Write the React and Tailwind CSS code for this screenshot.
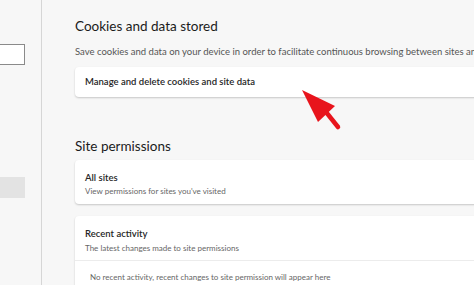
import React from 'react'

function Card({ children, className = '' }) {
  return (
    <div className={`w-[440px] rounded-[4px] bg-white shadow-[0_1px_2px_rgba(0,0,0,0.2)] ${className}`}>
      {children}
    </div>
  )
}

export default function App() {
  return (
    <div
      className="relative flex h-[285px] w-[474px] overflow-hidden bg-[#f7f7f7] text-[#1b1b1b]"
      style={{ fontFamily: 'Lato, "Noto Sans", sans-serif' }}
    >
      <aside className="w-[42px] shrink-0 border-r border-[#d6d6d6] bg-[#f7f7f7]">
        <div className="mt-[44px] h-[21px] w-[25px] border border-l-0 border-[#8a8a8a] bg-white" />
        <div className="mt-[112px] h-[21px] w-[25px] bg-[#e3e3e3]" />
      </aside>

      <main className="min-w-0 flex-1 whitespace-nowrap pl-[33px] pt-[15px]">
        <h2 className="text-[13.5px] font-normal leading-[22px] text-[#1b1b1b]">Cookies and data stored</h2>
        <p className="mt-[8px] text-[9.5px] leading-[14px] text-[#555]">
          Save cookies and data on your device in order to facilitate continuous browsing between sites and sessions
        </p>
        <Card className="mt-[8px] flex h-[30px] items-center px-[10px]">
          <span className="text-[9.5px] font-semibold text-[#262626]">Manage and delete cookies and site data</span>
        </Card>

        <h2 className="mt-[38px] text-[13.5px] font-normal leading-[22px] text-[#1b1b1b]">Site permissions</h2>
        <Card className="mt-[3px] h-[44px] px-[10px] pt-[10px]">
          <div className="text-[9.5px] font-semibold leading-[15px] text-[#262626]">All sites</div>
          <div className="text-[8px] leading-[13px] text-[#666]">View permissions for sites you've visited</div>
        </Card>

        <Card className="mt-[12px] h-[80px]">
          <div className="h-[45px] border-b border-[#ececec] px-[10px] pt-[10px]">
            <div className="text-[9.5px] font-semibold leading-[15px] text-[#262626]">Recent activity</div>
            <div className="mt-[1px] text-[8px] leading-[13px] text-[#666]">The latest changes made to site permissions</div>
          </div>
          <div className="pl-[15px] pt-[10px] text-[8px] leading-[13px] text-[#666]">
            No recent activity, recent changes to site permission will appear here
          </div>
        </Card>
      </main>

      <svg className="pointer-events-none absolute left-[296px] top-[84px]" width="50" height="50" viewBox="0 0 50 50">
        <line x1="30" y1="28" x2="42" y2="43" stroke="#e8141c" strokeWidth="4.5" strokeLinecap="round" />
        <polygon points="6,6 22,38 39,22" fill="#e8141c" />
      </svg>
    </div>
  )
}
